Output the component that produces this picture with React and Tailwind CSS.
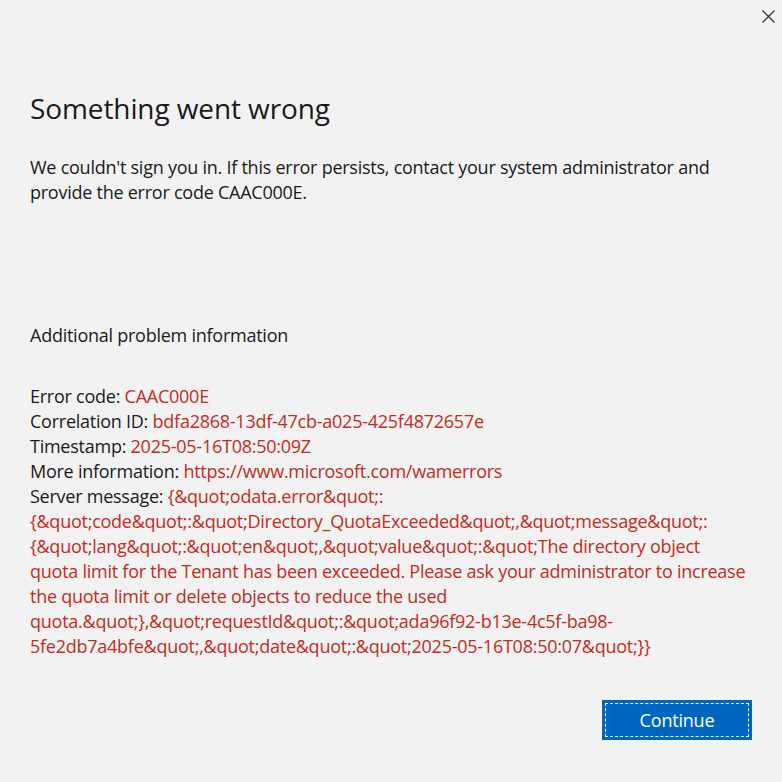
import React from 'react';

const serverLines = [
  '{&quot;odata.error&quot;:',
  '{&quot;code&quot;:&quot;Directory_QuotaExceeded&quot;,&quot;message&quot;:',
  '{&quot;lang&quot;:&quot;en&quot;,&quot;value&quot;:&quot;The directory object',
  'quota limit for the Tenant has been exceeded. Please ask your administrator to increase',
  'the quota limit or delete objects to reduce the used',
  'quota.&quot;},&quot;requestId&quot;:&quot;ada96f92-b13e-4c5f-ba98-',
  '5fe2db7a4bfe&quot;,&quot;date&quot;:&quot;2025-05-16T08:50:07&quot;}}',
];

const Row = ({ label, value }) => (
  <div className="whitespace-nowrap">
    {label} <span className="text-[#c42b1c]">{value}</span>
  </div>
);

export default function App() {
  return (
    <div
      className="w-[782px] h-[782px] bg-[#f2f2f2] text-[#1a1a1a] flex flex-col relative overflow-hidden"
      style={{ fontFamily: '"Open Sans", "Noto Sans", sans-serif' }}
    >
      {/* bouton fermer */}
      <button className="absolute top-[8px] right-[6px] w-[16px] h-[16px] flex items-center justify-center">
        <svg width="13" height="13" viewBox="0 0 13 13" fill="none" stroke="#333" strokeWidth="1.3">
          <path d="M0.5 0.5 L12.5 12.5 M12.5 0.5 L0.5 12.5" />
        </svg>
      </button>

      <div className="flex-1 flex flex-col pl-[30px] pt-[88px]">
        <h1 className="text-[28px] leading-[40px] font-normal tracking-[-0.1px]">Something went wrong</h1>

        <div className="mt-[27px] text-[18px] leading-[25px] tracking-[-0.25px]">
          <div>We couldn't sign you in. If this error persists, contact your system administrator and</div>
          <div>provide the error code CAAC000E.</div>
        </div>

        <div className="mt-[118px] text-[18px] leading-[25px] tracking-[-0.25px]">
          Additional problem information
        </div>

        <div className="mt-[36px] text-[18px] leading-[25px] tracking-[-0.25px]">
          <Row label="Error code:" value="CAAC000E" />
          <Row label="Correlation ID:" value="bdfa2868-13df-47cb-a025-425f4872657e" />
          <Row label="Timestamp:" value="2025-05-16T08:50:09Z" />
          <Row label="More information:" value="https://www.microsoft.com/wamerrors" />
          <Row label="Server message:" value={serverLines[0]} />
          {serverLines.slice(1).map((line) => (
            <div key={line} className="whitespace-nowrap text-[#c42b1c]">{line}</div>
          ))}
        </div>
      </div>

      {/* pied */}
      <div className="flex justify-end pr-[30px] pb-[42px]">
        <button className="w-[150px] h-[40px] bg-[#0067c0] p-[3px]">
          <span className="w-full h-full flex items-center justify-center border border-dashed border-white text-white text-[18px] tracking-[-0.2px]">
            Continue
          </span>
        </button>
      </div>
    </div>
  );
}
